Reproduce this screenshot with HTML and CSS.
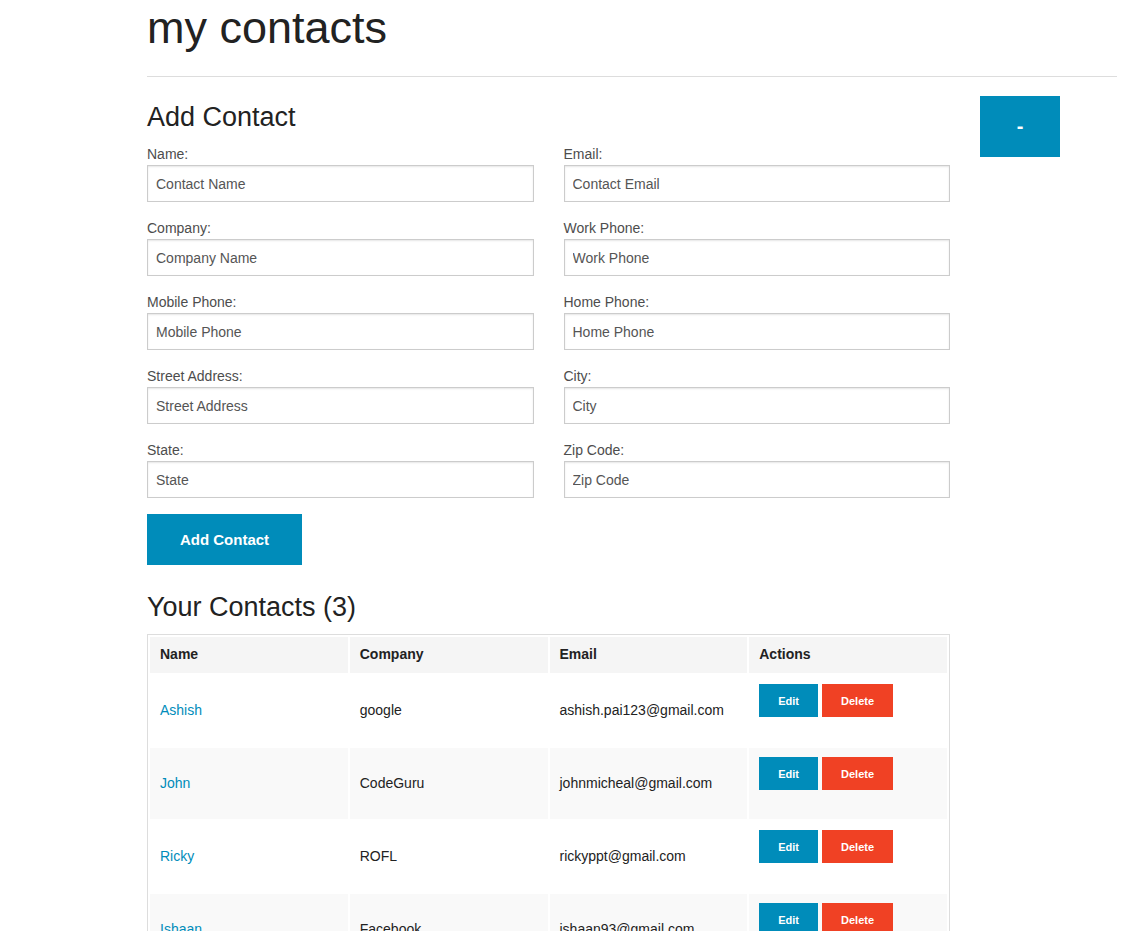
FILE: index.html
```html
<!DOCTYPE html>
<html lang="en">
<head>
<meta charset="utf-8">
<title>my contacts</title>
<link rel="stylesheet" href="styles.css">
</head>
<body>
<div class="page">
  <h1 class="title">my contacts</h1>
  <hr class="rule">
  <div class="layout">
    <main class="main">
      <h3 class="section-title first">Add Contact</h3>
      <form class="form">
        <div class="field"><label class="label">Name:</label><input class="input" type="text" placeholder="Contact Name"></div>
        <div class="field"><label class="label">Email:</label><input class="input" type="text" placeholder="Contact Email"></div>
        <div class="field"><label class="label">Company:</label><input class="input" type="text" placeholder="Company Name"></div>
        <div class="field"><label class="label">Work Phone:</label><input class="input" type="text" placeholder="Work Phone"></div>
        <div class="field"><label class="label">Mobile Phone:</label><input class="input" type="text" placeholder="Mobile Phone"></div>
        <div class="field"><label class="label">Home Phone:</label><input class="input" type="text" placeholder="Home Phone"></div>
        <div class="field"><label class="label">Street Address:</label><input class="input" type="text" placeholder="Street Address"></div>
        <div class="field"><label class="label">City:</label><input class="input" type="text" placeholder="City"></div>
        <div class="field"><label class="label">State:</label><input class="input" type="text" placeholder="State"></div>
        <div class="field"><label class="label">Zip Code:</label><input class="input" type="text" placeholder="Zip Code"></div>
      </form>
      <button class="btn btn-add" type="button">Add Contact</button>
      <h3 class="section-title second">Your Contacts (3)</h3>
      <table class="contacts">
        <thead>
          <tr><th>Name</th><th>Company</th><th>Email</th><th>Actions</th></tr>
        </thead>
        <tbody>
          <tr>
            <td><a class="link" href="#">Ashish</a></td><td>google</td><td>ashish.pai123@gmail.com</td>
            <td><div class="actions"><button class="btn-tiny edit" type="button">Edit</button><button class="btn-tiny delete" type="button">Delete</button></div></td>
          </tr>
          <tr>
            <td><a class="link" href="#">John</a></td><td>CodeGuru</td><td>johnmicheal@gmail.com</td>
            <td><div class="actions"><button class="btn-tiny edit" type="button">Edit</button><button class="btn-tiny delete" type="button">Delete</button></div></td>
          </tr>
          <tr>
            <td><a class="link" href="#">Ricky</a></td><td>ROFL</td><td>rickyppt@gmail.com</td>
            <td><div class="actions"><button class="btn-tiny edit" type="button">Edit</button><button class="btn-tiny delete" type="button">Delete</button></div></td>
          </tr>
          <tr>
            <td><a class="link" href="#">Ishaan</a></td><td>Facebook</td><td>ishaan93@gmail.com</td>
            <td><div class="actions"><button class="btn-tiny edit" type="button">Edit</button><button class="btn-tiny delete" type="button">Delete</button></div></td>
          </tr>
        </tbody>
      </table>
    </main>
    <aside class="side">
      <button class="btn btn-toggle" type="button">-</button>
    </aside>
  </div>
</div>
</body>
</html>
```
FILE: styles.css
```css
html, body {
  margin: 0;
  padding: 0;
  background: #fff;
}
body {
  font-family: "Liberation Sans", Arial, Helvetica, sans-serif;
  color: #222;
  font-size: 14px;
}
.page {
  padding: 0 15px 0 147px;
}
.title {
  margin: 1px 0 0;
  font-size: 45px;
  line-height: 53px;
  font-weight: normal;
  color: #222;
}
.rule {
  margin: 22px 0 0;
  border: 0;
  border-top: 1px solid #ddd;
  height: 0;
}
.layout {
  display: flex;
  align-items: flex-start;
}
.main {
  width: 803px;
  flex: none;
}
.side {
  margin-left: 30px;
  padding-top: 19px;
}
.section-title {
  margin: 0;
  font-size: 27px;
  line-height: 32px;
  font-weight: normal;
  color: #222;
}
.section-title.first {
  margin-top: 24px;
  margin-bottom: 11px;
}
.section-title.second {
  margin-top: 26px;
  margin-bottom: 11px;
}
.form {
  display: grid;
  grid-template-columns: 1fr 1fr;
  column-gap: 30px;
}
.field {
  display: flex;
  flex-direction: column;
  margin-bottom: 16px;
}
.label {
  font-size: 14px;
  line-height: 21px;
  color: #4d4d4d;
}
.input {
  box-sizing: border-box;
  height: 37px;
  padding: 0 8px;
  border: 1px solid #ccc;
  box-shadow: inset 0 1px 2px rgba(0, 0, 0, 0.1);
  font-family: inherit;
  font-size: 14px;
  color: #222;
  background: #fff;
  margin: 0;
}
.input::placeholder {
  color: #555;
  opacity: 1;
}
.btn {
  border: 0;
  background: #008cba;
  color: #fff;
  font-family: inherit;
  font-weight: bold;
  cursor: pointer;
  margin: 0;
  display: block;
}
.btn-add {
  width: 155px;
  height: 51px;
  font-size: 15px;
  padding: 0;
}
.btn-toggle {
  width: 80px;
  height: 61px;
  font-size: 20px;
  padding: 0;
}
.contacts {
  width: 100%;
  table-layout: fixed;
  border: 1px solid #ddd;
  border-spacing: 2px;
  background: #fff;
}
.contacts th {
  background: #f5f5f5;
  text-align: left;
  font-weight: bold;
  font-size: 14px;
  line-height: 20px;
  padding: 7px 10px 9px;
  color: #222;
}
.contacts td {
  padding: 8px 10px 10px;
  font-size: 14px;
  line-height: 18px;
  color: #222;
  vertical-align: middle;
}
.contacts tbody tr:nth-child(even) td {
  background: #f9f9f9;
}
.link {
  color: #008cba;
  text-decoration: none;
}
.actions {
  display: flex;
  gap: 4px;
  margin-top: 1px;
  margin-bottom: 19px;
}
.btn-tiny {
  border: 0;
  margin: 0;
  height: 33px;
  padding: 0 19px;
  font-family: inherit;
  font-size: 11px;
  font-weight: bold;
  color: #fff;
  cursor: pointer;
}
.btn-tiny.edit {
  background: #008cba;
}
.btn-tiny.delete {
  background: #f04124;
}
```
